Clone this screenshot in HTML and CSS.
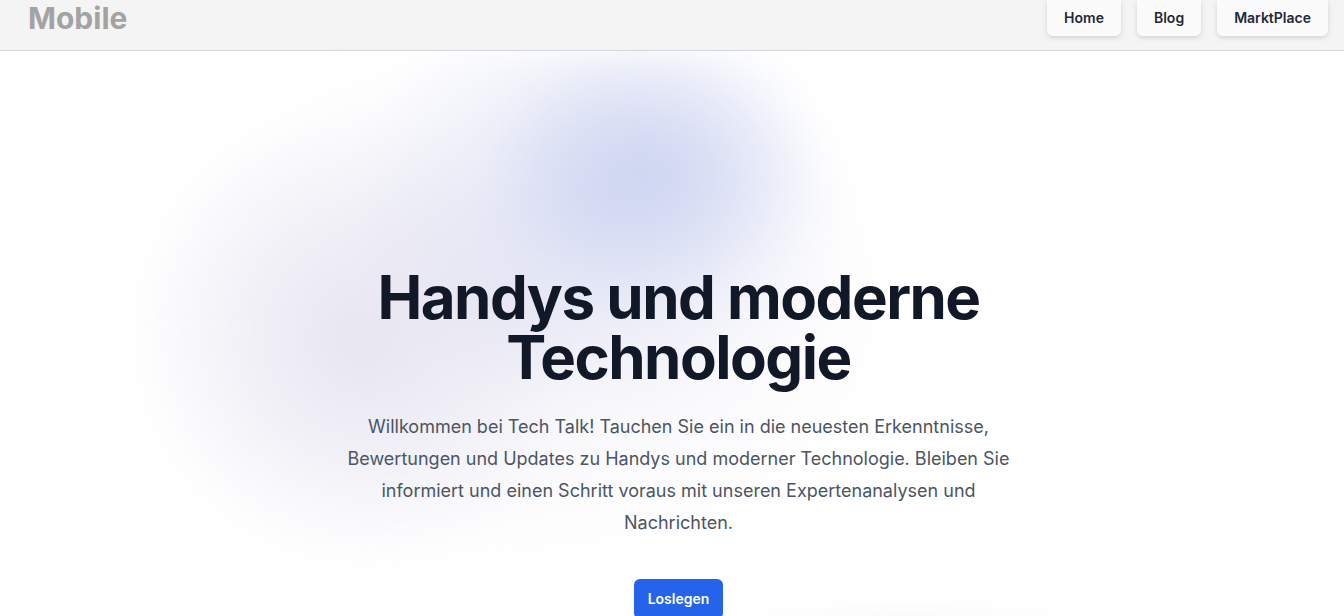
FILE: index.html
```html
<!DOCTYPE html>
<html lang="de">
<head>
<meta charset="utf-8">
<title>Mobile</title>
<link rel="stylesheet" href="styles.css">
</head>
<body>
<header class="topbar">
  <div class="brand">Mobile</div>
  <nav class="nav">
    <a class="nav-btn" href="#">Home</a>
    <a class="nav-btn" href="#">Blog</a>
    <a class="nav-btn" href="#">MarktPlace</a>
  </nav>
</header>
<main class="hero">
  <div class="glow" aria-hidden="true"></div>
  <div class="glow-low" aria-hidden="true"></div>
  <div class="hero-inner">
    <h1 class="title">Handys und moderne Technologie</h1>
    <p class="lead">Willkommen bei Tech Talk! Tauchen Sie ein in die neuesten Erkenntnisse, Bewertungen und Updates zu Handys und moderner Technologie. Bleiben Sie informiert und einen Schritt voraus mit unseren Expertenanalysen und Nachrichten.</p>
    <div class="actions">
      <a class="cta" href="#">Loslegen</a>
    </div>
  </div>
</main>
</body>
</html>
```

FILE: styles.css
```css
* { box-sizing: border-box; }
html, body { margin: 0; padding: 0; }
body {
  font-family: Inter, "Noto Sans", sans-serif;
  background: #ffffff;
  overflow: hidden;
  height: 616px;
}
.topbar {
  height: 51px;
  background: #f4f4f4;
  border-bottom: 1px solid #d4d5de;
  display: flex;
  align-items: flex-start;
  justify-content: space-between;
  padding: 0 16px 0 28px;
  position: relative;
  z-index: 2;
}
.brand {
  font-size: 30px;
  font-weight: 700;
  color: #a3a3a3;
  line-height: 36px;
}
.nav {
  display: flex;
  gap: 16px;
}
.nav-btn {
  display: block;
  height: 36px;
  line-height: 36px;
  padding: 0 17px;
  background: #fbfbfb;
  border-radius: 0 0 6px 6px;
  box-shadow: 0 2px 5px rgba(0,0,0,0.13);
  color: #1f2937;
  font-size: 14px;
  font-weight: 600;
  text-decoration: none;
}
.hero {
  position: relative;
  height: 565px;
}
.glow {
  position: absolute;
  left: 0; top: 0;
  width: 1000px; height: 565px;
  background:
    radial-gradient(ellipse 170px 140px at 650px 120px, rgba(198,207,240,0.75), rgba(198,207,240,0) 100%),
    radial-gradient(ellipse 250px 210px at 600px 150px, rgba(208,214,240,0.65), rgba(208,214,240,0) 100%),
    radial-gradient(ellipse 230px 230px at 360px 290px, rgba(224,220,236,0.7), rgba(224,220,236,0) 100%),
    radial-gradient(ellipse 390px 270px at 520px 250px, rgba(238,238,246,0.7), rgba(238,238,246,0) 100%);
  filter: blur(16px);
}
.glow-low {
  position: absolute;
  left: 720px; top: 528px;
  width: 420px; height: 60px;
  background: radial-gradient(ellipse 190px 22px at 190px 40px, rgba(249,249,250,0.9), rgba(249,249,250,0));
}
.hero-inner {
  position: relative;
  padding: 216px 0 0 13px;
  display: flex;
  flex-direction: column;
  align-items: center;
  text-align: center;
}
.title {
  margin: 0;
  font-size: 60px;
  line-height: 60px;
  font-weight: 700;
  letter-spacing: -1.5px;
  color: #111827;
  max-width: 672px;
}
.lead {
  margin: 24px 0 0;
  max-width: 672px;
  font-size: 18px;
  line-height: 32px;
  color: #4b5563;
}
.actions {
  margin-top: 40px;
}
.cta {
  display: inline-block;
  background: #2563eb;
  color: #ffffff;
  font-size: 14px;
  font-weight: 600;
  line-height: 20px;
  padding: 10px 14px;
  border-radius: 6px;
  text-decoration: none;
  box-shadow: 0 1px 2px rgba(0,0,0,0.05);
}
```
